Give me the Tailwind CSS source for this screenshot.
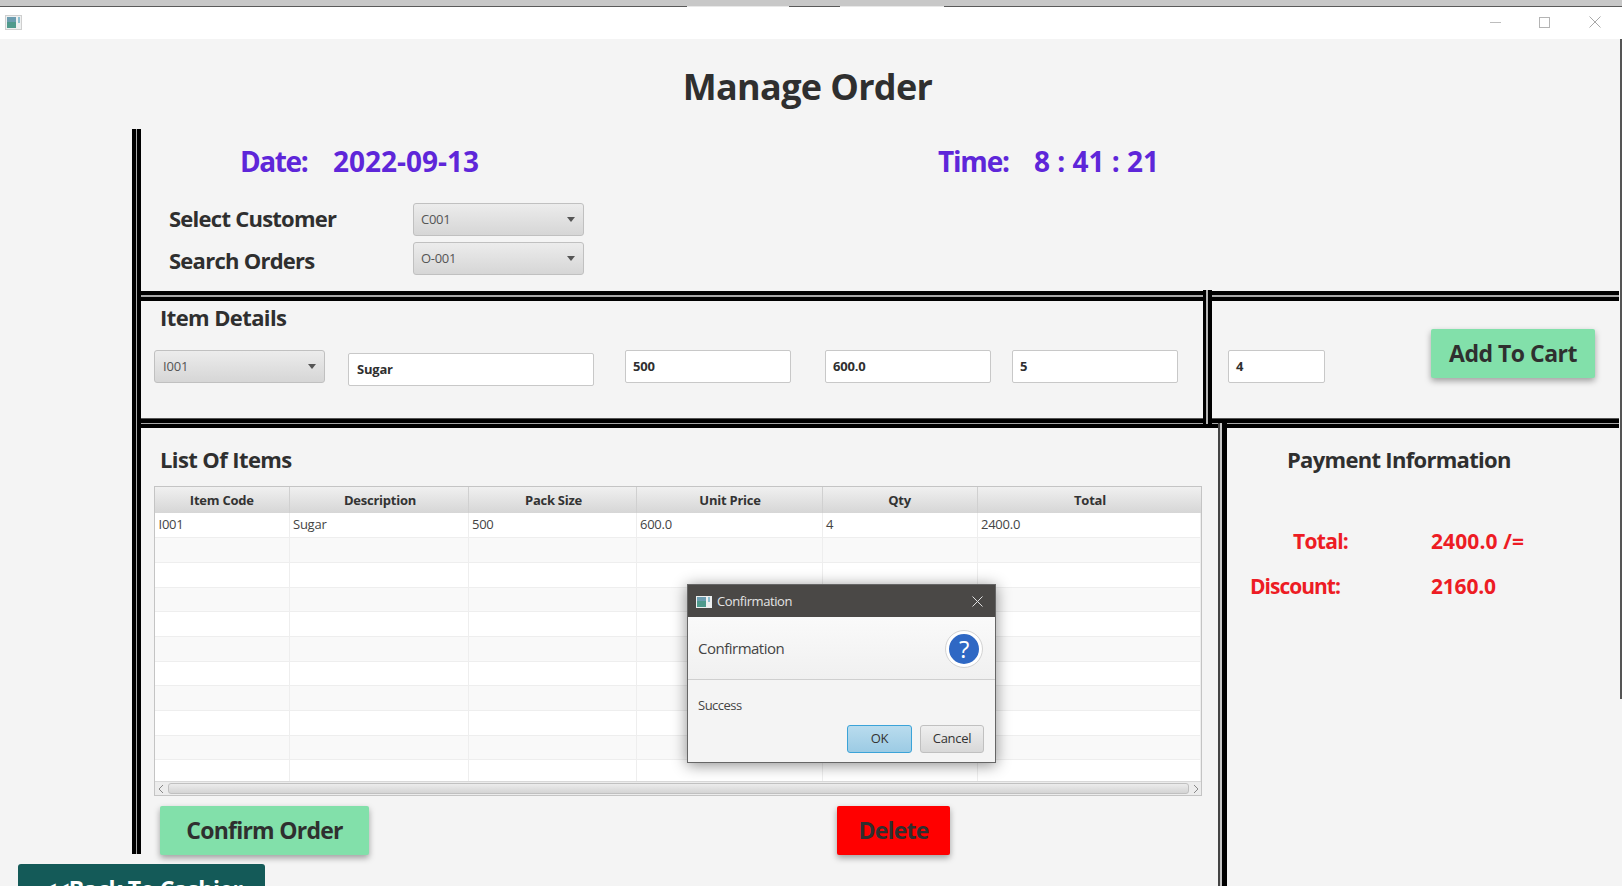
<!DOCTYPE html>
<html lang="en">
<head>
  <meta charset="UTF-8">
  <title>Manage Order</title>
  <script src="https://cdn.jsdelivr.net/npm/@tailwindcss/browser@4"></script>
</head>
<body class="bg-[#f4f4f4]">
<div class="relative w-[1622px] h-[886px] overflow-hidden flex flex-col bg-[#f4f4f4] text-[#2f2f2f] font-['Open_Sans',sans-serif]">

  <!-- desktop strip behind the window -->
  <div class="h-[6px] bg-[#c8c8c8]"></div>
  <div class="h-px bg-[#5a5a5a] flex">
    <div class="ml-[687px] w-[102px] bg-[#e8e8e8]"></div>
    <div class="ml-[51px] w-[104px] bg-[#e8e8e8]"></div>
  </div>

  <!-- title bar -->
  <div class="h-[32px] bg-white flex items-center shrink-0">
    <svg class="ml-[5px] mb-[2px]" width="17" height="15" viewBox="0 0 17 15">
      <rect x="0.5" y="0.5" width="16" height="14" fill="#eef0f0" stroke="#cfcfcf"/>
      <rect x="2" y="2" width="9" height="11" fill="#4f9a8c"/>
      <rect x="2" y="2" width="9" height="5" fill="#6c9db0"/>
      <rect x="13" y="2" width="2" height="6" fill="#8fc0d0"/>
    </svg>
    <div class="ml-auto mb-[2px] flex items-center">
      <div class="w-[11px] h-px bg-[#bdbdbd]"></div>
      <div class="ml-[38px] w-[11px] h-[11px] border border-[#b4b4b4]"></div>
      <svg class="ml-[39px] mr-[21px]" width="12" height="12" viewBox="0 0 12 12">
        <path d="M0.5 0.5L11.5 11.5M11.5 0.5L0.5 11.5" stroke="#a8a8a8" fill="none"/>
      </svg>
    </div>
  </div>

  <!-- heading -->
  <div class="h-[90px] shrink-0 flex items-start justify-center pr-[7px] pt-[23px]">
    <h1 class="text-[36px] leading-[50px] font-bold tracking-[-0.65px]">Manage Order</h1>
  </div>

  <div class="flex flex-1 min-h-0">
    <!-- left gutter with the long separator -->
    <div class="w-[132px] shrink-0"></div>
    <div class="w-[9px] h-[725px] shrink-0 flex">
      <div class="w-[4px] bg-black"></div>
      <div class="w-px bg-[#a8a8a8]"></div>
      <div class="w-[4px] bg-black"></div>
    </div>

    <div class="w-[1477px] flex flex-col">
      <!-- date, time, customer -->
      <section class="h-[162px] shrink-0 pt-[17px]">
        <div class="flex items-center h-[30px] text-[28px] font-bold text-[#5e26d9] leading-[30px]">
          <span class="ml-[99px] w-[93px] tracking-[-1.4px]">Date:</span>
          <span class="w-[605px] tracking-[0px]">2022-09-13</span>
          <span class="w-[96px] tracking-[-1.2px]">Time:</span>
          <span class="tracking-[0px]">8 : 41 : 21</span>
        </div>
        <div class="flex mt-[27px] ml-[28px] text-[22px] font-bold leading-[30px] tracking-[-0.75px]">
          <div class="w-[244px]">
            <div class="h-[30px]">Select Customer</div>
            <div class="h-[30px] mt-[12px]">Search Orders</div>
          </div>
          <div class="flex flex-col gap-[6px] font-normal tracking-[-0.3px]">
            <div class="w-[171px] h-[33px] flex items-center justify-between pl-[7px] pr-[8px] pb-[1px] rounded-[3px] border border-[#c0c0c0] bg-linear-to-b from-[#ececec] to-[#d6d6d6] text-[13px] text-[#555]">
              C001
              <span class="w-0 h-0 border-x-[4px] border-x-transparent border-t-[5px] border-t-[#555]"></span>
            </div>
            <div class="w-[171px] h-[33px] flex items-center justify-between pl-[7px] pr-[8px] pb-[1px] rounded-[3px] border border-[#c0c0c0] bg-linear-to-b from-[#ececec] to-[#d6d6d6] text-[13px] text-[#555]">
              O-001
              <span class="w-0 h-0 border-x-[4px] border-x-transparent border-t-[5px] border-t-[#555]"></span>
            </div>
          </div>
        </div>
      </section>

      <!-- separator -->
      <div class="h-[10px] w-[1478px] shrink-0 flex flex-col">
        <div class="h-[4px] bg-black"></div>
        <div class="h-[2px] bg-[#a8a8a8]"></div>
        <div class="h-[4px] bg-black"></div>
      </div>

      <!-- item details + cart -->
      <section class="h-[117px] shrink-0 flex">
        <div class="w-[1062px] shrink-0">
          <h2 class="ml-[19px] mt-[1px] h-[30px] text-[22px] leading-[30px] font-bold tracking-[-0.6px]">Item Details</h2>
          <div class="flex items-start ml-[13px] mt-[18px] text-[13px] font-bold tracking-[-0.2px]">
            <div class="w-[171px] h-[33px] flex items-center justify-between pl-[8px] pr-[8px] rounded-[3px] border border-[#c0c0c0] bg-linear-to-b from-[#ececec] to-[#d6d6d6] font-normal text-[#555]">
              I001
              <span class="w-0 h-0 border-x-[4px] border-x-transparent border-t-[5px] border-t-[#555]"></span>
            </div>
            <div class="ml-[23px] mt-[3px] w-[246px] h-[33px] flex items-center pl-[8px] pt-[1px] bg-white border border-[#c8c8c8] rounded-[2px]">Sugar</div>
            <div class="ml-[31px] w-[166px] h-[33px] flex items-center pl-[7px] bg-white border border-[#c8c8c8] rounded-[2px]">500</div>
            <div class="ml-[34px] w-[166px] h-[33px] flex items-center pl-[7px] bg-white border border-[#c8c8c8] rounded-[2px]">600.0</div>
            <div class="ml-[21px] w-[166px] h-[33px] flex items-center pl-[7px] bg-white border border-[#c8c8c8] rounded-[2px]">5</div>
          </div>
        </div>
        <div class="relative z-10 w-[9px] h-[134px] -mt-[11px] shrink-0 flex">
          <div class="w-[3px] bg-black"></div>
          <div class="w-[2px] bg-[#b4b4b4]"></div>
          <div class="w-[4px] bg-black"></div>
        </div>
        <div class="flex items-start pt-[28px] pl-[16px]">
          <div class="mt-[21px] w-[97px] h-[33px] flex items-center pl-[7px] bg-white border border-[#c8c8c8] rounded-[2px] text-[13px] font-bold">4</div>
          <button class="ml-[106px] w-[164px] h-[49px] pb-[1px] bg-[#82e0aa] rounded-[2px] shadow-[0_3px_6px_rgba(0,0,0,0.35)] text-[23px] font-bold tracking-[-0.5px]">Add To Cart</button>
        </div>
      </section>

      <!-- separator -->
      <div class="h-[10px] w-[1478px] shrink-0 flex flex-col">
        <div class="h-[5px] bg-black border-t border-[#555]"></div>
        <div class="h-px bg-[#a8a8a8]"></div>
        <div class="h-[4px] bg-black"></div>
      </div>

      <!-- list + payment -->
      <section class="flex flex-1 min-h-0">
        <div class="w-[1077px] shrink-0">
          <h2 class="ml-[19px] h-[58px] pt-[16px] text-[22px] leading-[30px] font-bold tracking-[-0.6px]">List Of Items</h2>
          <div class="ml-[13px] w-[1048px] h-[310px] border border-[#c4c4c4] flex flex-col overflow-hidden">
            <div class="h-[294px] shrink-0 overflow-hidden bg-white">
              <table class="w-full table-fixed border-collapse text-[13px] tracking-[-0.25px] text-[#444] [&_td]:border-r [&_td]:border-b [&_td]:border-[#eeeeee] [&_td]:px-[3.5px] [&_tr]:h-[24.7px]">
                <thead>
                  <tr class="!h-[26px] bg-linear-to-b from-[#f0f0f0] to-[#d6d6d6] text-[#333] font-bold">
                    <th class="w-[134px] pt-[1px] border-r border-[#d0d0d0]">Item Code</th>
                    <th class="w-[179px] pt-[1px] pl-[3px] border-r border-[#d0d0d0]">Description</th>
                    <th class="w-[168px] pt-[1px] pl-[3px] border-r border-[#d0d0d0]">Pack Size</th>
                    <th class="w-[186px] pt-[1px] pl-[2px] border-r border-[#d0d0d0]">Unit Price</th>
                    <th class="w-[155px] pt-[1px] border-r border-[#d0d0d0]">Qty</th>
                    <th class="pt-[1px] pl-[2px]">Total</th>
                  </tr>
                </thead>
                <tbody>
                  <tr class="bg-white"><td>I001</td><td>Sugar</td><td>500</td><td>600.0</td><td>4</td><td>2400.0</td></tr>
                  <tr class="bg-[#f9f9f9]"><td></td><td></td><td></td><td></td><td></td><td></td></tr>
                  <tr class="bg-white"><td></td><td></td><td></td><td></td><td></td><td></td></tr>
                  <tr class="bg-[#f9f9f9]"><td></td><td></td><td></td><td></td><td></td><td></td></tr>
                  <tr class="bg-white"><td></td><td></td><td></td><td></td><td></td><td></td></tr>
                  <tr class="bg-[#f9f9f9]"><td></td><td></td><td></td><td></td><td></td><td></td></tr>
                  <tr class="bg-white"><td></td><td></td><td></td><td></td><td></td><td></td></tr>
                  <tr class="bg-[#f9f9f9]"><td></td><td></td><td></td><td></td><td></td><td></td></tr>
                  <tr class="bg-white"><td></td><td></td><td></td><td></td><td></td><td></td></tr>
                  <tr class="bg-[#f9f9f9]"><td></td><td></td><td></td><td></td><td></td><td></td></tr>
                  <tr class="bg-white"><td></td><td></td><td></td><td></td><td></td><td></td></tr>
                </tbody>
              </table>
            </div>
            <div class="flex-1 bg-[#ececec] border-t border-[#d8d8d8] flex items-center pl-[2px] pr-[1px]">
              <svg width="8" height="10" viewBox="0 0 8 10"><path d="M6 1L2 5L6 9" stroke="#888" fill="none"/></svg>
              <div class="ml-[3px] flex-1 h-[11px] rounded-[3px] border border-[#c0c0c0] bg-linear-to-b from-[#ececec] to-[#d4d4d4]"></div>
              <svg class="ml-[3px]" width="8" height="10" viewBox="0 0 8 10"><path d="M2 1L6 5L2 9" stroke="#888" fill="none"/></svg>
            </div>
          </div>
          <div class="flex mt-[10px] ml-[19px] text-[23px] font-bold">
            <button class="w-[209px] h-[49px] bg-[#82e0aa] rounded-[2px] shadow-[0_3px_6px_rgba(0,0,0,0.35)] tracking-[-0.75px]">Confirm Order</button>
            <button class="ml-[468px] w-[113px] h-[49px] bg-[#ff0000] rounded-[2px] shadow-[0_3px_6px_rgba(0,0,0,0.35)] tracking-[-0.8px]">Delete</button>
          </div>
        </div>
        <div class="relative z-10 w-[9px] -mt-[5px] shrink-0 flex">
          <div class="w-[2px] bg-[#444]"></div>
          <div class="w-[2px] bg-[#c4c4c4]"></div>
          <div class="w-[5px] bg-black"></div>
        </div>
        <div class="flex-1 min-w-0">
          <h2 class="ml-[60px] h-[84px] pt-[16px] text-[22px] leading-[30px] font-bold tracking-[-0.7px]">Payment Information</h2>
          <div class="text-[21px] font-bold text-[#ed1c24] leading-[30px]">
            <div class="flex mt-[14px]">
              <span class="ml-[66px] w-[138px] tracking-[-0.7px]">Total:</span>
              <span class="tracking-[0.1px]">2400.0 /=</span>
            </div>
            <div class="flex mt-[15px]">
              <span class="ml-[23px] w-[181px] tracking-[-1px]">Discount:</span>
              <span class="tracking-[-0.2px]">2160.0</span>
            </div>
          </div>
        </div>
      </section>
    </div>
  </div>

  <!-- edge of the window behind -->
  <div class="absolute right-0 top-[39px] w-[2px] h-[660px] bg-[#555]"></div>

  <!-- back button runs off the bottom of the screen -->
  <button class="absolute left-[18px] top-[864px] w-[247px] h-[50px] flex justify-center pt-[8px] pl-[3px] bg-[#145a58] rounded-[3px] text-white text-[23px] leading-[34px] font-bold tracking-[-0.5px]">&lt;&lt;Back To Cashier</button>

  <!-- confirmation dialog -->
  <div class="absolute left-[687px] top-[584px] w-[309px] h-[179px] flex flex-col bg-[#f4f4f4] border border-[#666] shadow-[0_2px_14px_rgba(0,0,0,0.45)]">
    <div class="h-[32px] shrink-0 bg-[#4a4846] flex items-center pt-[1px] text-[13px] text-[#e4e4e4]">
      <svg class="ml-[8px]" width="16" height="12" viewBox="0 0 16 12">
        <rect width="16" height="12" fill="#eef0f0"/>
        <rect x="1" y="1" width="9" height="10" fill="#4f9a8c"/>
        <rect x="1" y="1" width="9" height="4" fill="#6c9db0"/>
        <rect x="12" y="1" width="2" height="5" fill="#8fc0d0"/>
      </svg>
      <span class="ml-[5px] tracking-[-0.4px]">Confirmation</span>
      <svg class="ml-auto mr-[12px]" width="11" height="11" viewBox="0 0 11 11">
        <path d="M0.5 0.5L10.5 10.5M10.5 0.5L0.5 10.5" stroke="#e0e0e0" fill="none"/>
      </svg>
    </div>
    <div class="h-[63px] shrink-0 flex items-center justify-between pl-[10px] pr-[13px] pt-[1px] border-b border-[#cfcfcf] bg-linear-to-b from-[#fafafa] to-[#f0f0f0] text-[15px] text-[#444] tracking-[-0.5px]">
      Confirmation
      <div class="w-[36px] h-[36px] rounded-full bg-[#2f68c4] border-[3px] border-white outline outline-[#d4d4d4] flex items-center justify-center text-white text-[24px] leading-none font-normal">?</div>
    </div>
    <div class="pl-[10px] pt-[16px] h-[35px] text-[13px] leading-[18px] text-[#444] tracking-[-0.5px]">Success</div>
    <div class="flex justify-end gap-[8px] pr-[11px] mt-[10px] text-[13px] text-[#333] tracking-[-0.3px]">
      <button class="w-[65px] h-[28px] rounded-[3px] border border-[#3ba3d8] bg-linear-to-b from-[#b9dcee] to-[#9ccbe4]">OK</button>
      <button class="w-[64px] h-[28px] rounded-[3px] border border-[#c0c0c0] bg-linear-to-b from-[#efefef] to-[#d8d8d8]">Cancel</button>
    </div>
  </div>
</div>
</body>
</html>
